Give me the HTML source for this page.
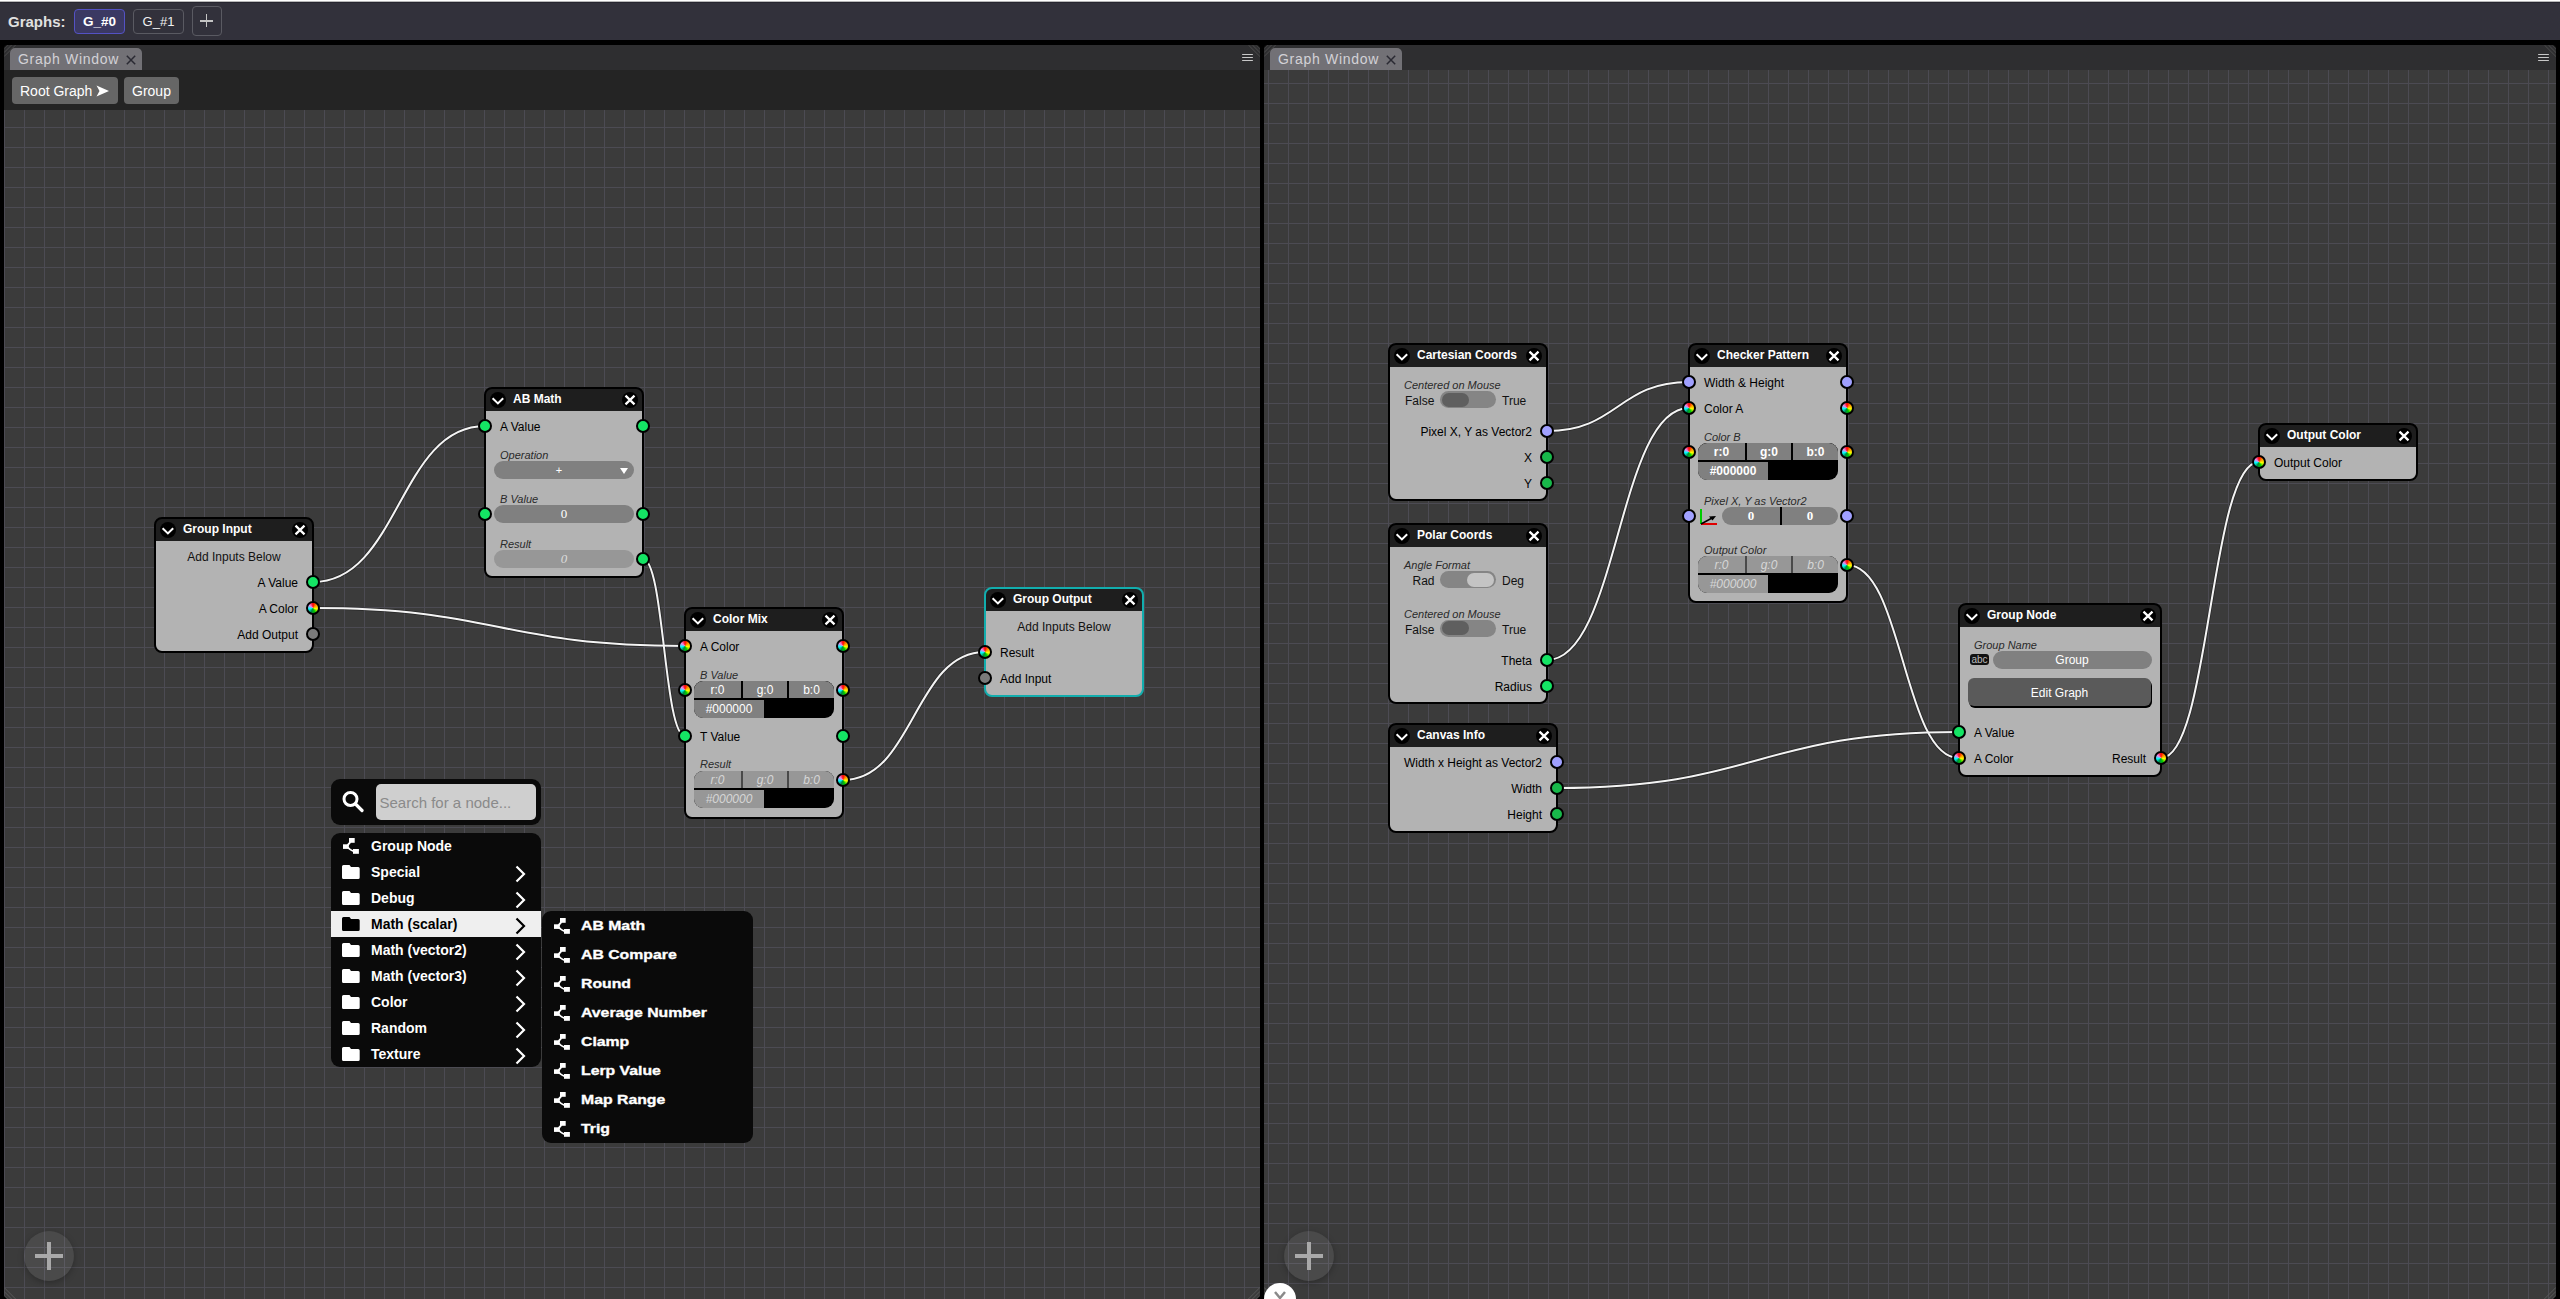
<!DOCTYPE html>
<html><head><meta charset="utf-8"><title>Graphs</title>
<style>
html,body{margin:0;padding:0;width:2560px;height:1299px;overflow:hidden;background:#000;font-family:"Liberation Sans",sans-serif;}
.abs{position:absolute;}
#topstrip{position:absolute;left:0;top:0;width:2560px;height:3px;background:linear-gradient(#fff 0,#fff 1px,#b8b8b8 1px,#b8b8b8 2px,#26252f 2px);z-index:2}
#topbar{position:absolute;left:0;top:2px;width:2560px;height:38px;background:#32313b;}
.win{position:absolute;top:45px;bottom:0;background:#2e2e30;border-radius:3px 3px 0 0;overflow:hidden;}
.tab{position:absolute;top:3px;height:22px;border-radius:5px 5px 0 0;background:#727176;}
.grid{position:absolute;left:0;right:0;bottom:0;background-color:#3b3b3b;
 background-image:linear-gradient(to right,#4c4b53 1px,transparent 1px),linear-gradient(to bottom,#4c4b53 1px,transparent 1px);
 background-size:20px 20px;}
.node{position:absolute;border:2px solid #000;border-radius:8px;background:linear-gradient(#1e1e1e 22px,#b3b3b3 22px);}
.hdr{position:absolute;left:0;top:0;right:0;height:22px;background:#1e1e1e;border-radius:6px 6px 0 0;}
.fab{position:absolute;width:50px;height:50px;border-radius:50%;background:rgba(255,255,255,0.08);box-shadow:0 2px 6px rgba(0,0,0,0.25);}
.fab:before{content:"";position:absolute;left:11px;top:23px;width:28px;height:4px;background:#a9a9a9;}
.fab:after{content:"";position:absolute;left:23px;top:11px;width:4px;height:28px;background:#a9a9a9;}
.ham{position:absolute;width:11px;height:1.6px;background:#c8c8c8;border-radius:1px;}
</style></head><body>
<div id="topstrip"></div>
<div id="topbar">
  <div style="position:absolute;left:8px;top:1.3px;height:38px;font:bold 15px 'Liberation Sans',sans-serif;line-height:38px;color:#e0e0e0;">Graphs:</div>
  <div style="position:absolute;left:74px;top:7px;width:49px;height:23px;border:1px solid #5452c4;border-radius:4px;background:#3b3963;color:#fff;font:bold 13.5px 'Liberation Sans',sans-serif;line-height:23px;text-align:center;">G_#0</div>
  <div style="position:absolute;left:133px;top:7px;width:49px;height:23px;border:1px solid #5a5a62;border-radius:4px;color:#f0f0f0;font:13px 'Liberation Sans',sans-serif;line-height:23px;text-align:center;">G_#1</div>
  <div style="position:absolute;left:192px;top:4px;width:28px;height:28px;border:1px solid #5a5a62;border-radius:4px;"></div>
  <div style="position:absolute;left:200px;top:18.2px;width:13px;height:1.9px;background:#c4c4c4"></div>
  <div style="position:absolute;left:205.5px;top:12.2px;width:1.9px;height:13px;background:#c4c4c4"></div>
</div>

<!-- LEFT WINDOW -->
<div class="win" style="left:4px;width:1256px;">
  <div class="tab" style="left:6px;width:132px;"></div>
  <div style="position:absolute;left:14px;top:3px;font:14px 'Liberation Sans',sans-serif;line-height:22px;letter-spacing:0.7px;color:#d2d2d6;">Graph Window</div>
  <svg width="10" height="10" style="position:absolute;left:122px;top:10px" viewBox="0 0 10 10"><path d="M0.8 0.8 L9.2 9.2 M9.2 0.8 L0.8 9.2" stroke="#2a2a33" stroke-width="1.5"/></svg>
  <div class="ham" style="left:1238px;top:8.5px"></div><div class="ham" style="left:1238px;top:11.6px"></div><div class="ham" style="left:1238px;top:14.7px"></div>
  <div style="position:absolute;left:0;top:25px;width:1256px;height:40px;background:#242424;"></div>
  <div style="position:absolute;left:8px;top:32px;width:106px;height:27px;border-radius:4px;background:#666;"></div>
  <div style="position:absolute;left:16px;top:33px;font:14px 'Liberation Sans',sans-serif;line-height:27px;color:#fff;">Root Graph</div>
  <svg width="14" height="12" style="position:absolute;left:92px;top:40px" viewBox="0 0 14 12"><path d="M0.5 0.5 L13 6 L0.5 11.5 L3.5 6 Z" fill="#fff"/></svg>
  <div style="position:absolute;left:120px;top:32px;width:55px;height:27px;border-radius:4px;background:#666;"></div>
  <div style="position:absolute;left:120px;top:33px;width:55px;text-align:center;font:14px 'Liberation Sans',sans-serif;line-height:27px;color:#fff;">Group</div>
  <div class="grid" style="top:65px;background-position:0px 17px;">
    <div style="position:absolute;left:-4px;top:-110px;width:1260px;height:1299px;">
      <svg width="1260" height="1299" style="position:absolute;left:0;top:0" fill="none"><path d="M313 582 C399.0 582 399.0 426 485 426" stroke="#000" stroke-opacity="0.35" stroke-width="3.6"/><path d="M313 608 C499.0 608 499.0 646 685 646" stroke="#000" stroke-opacity="0.35" stroke-width="3.6"/><path d="M643 559 C664.0 559 664.0 736 685 736" stroke="#000" stroke-opacity="0.35" stroke-width="3.6"/><path d="M843 780 C914.0 780 914.0 652 985 652" stroke="#000" stroke-opacity="0.35" stroke-width="3.6"/><path d="M313 582 C399.0 582 399.0 426 485 426" stroke="#f4f4f4" stroke-width="2"/><path d="M313 608 C499.0 608 499.0 646 685 646" stroke="#f4f4f4" stroke-width="2"/><path d="M643 559 C664.0 559 664.0 736 685 736" stroke="#f4f4f4" stroke-width="2"/><path d="M843 780 C914.0 780 914.0 652 985 652" stroke="#f4f4f4" stroke-width="2"/></svg>
      <div class="node" style="left:154px;top:517px;width:156px;height:132px;border-color:#000;"><div style="position:absolute;left:-2px;top:-2px;width:160px;height:136px;"><svg width="16" height="16" style="position:absolute;left:6px;top:5px" viewBox="0 0 16 16"><circle cx="8" cy="8" r="8" fill="#000"/><path d="M2.6 6.3 L7.9 11.4 L13.2 6.3" stroke="#fff" stroke-width="2" fill="none"/></svg><svg width="16" height="16" style="position:absolute;left:138px;top:5px" viewBox="0 0 16 16"><circle cx="8" cy="8" r="8" fill="#000"/><path d="M3.5 3.7 L12.5 12.3 M12.5 3.7 L3.5 12.3" stroke="#fff" stroke-width="2.3" fill="none"/></svg><div style="position:absolute;left:29px;top:1.84px;font:normal bold 12px 'Liberation Sans', sans-serif;line-height:20px;height:20px;color:#fff;white-space:nowrap;">Group Input</div><div style="position:absolute;left:10.0px;width:140px;text-align:center;top:30.34px;font:normal normal 12px 'Liberation Sans', sans-serif;line-height:20px;height:20px;color:#111;white-space:nowrap;">Add Inputs Below</div><div style="position:absolute;right:16px;top:56.34px;font:normal normal 12px 'Liberation Sans', sans-serif;line-height:20px;height:20px;color:#000;white-space:nowrap;">A Value</div><div style="position:absolute;left:152px;top:58px;width:10px;height:10px;border:2px solid #000;border-radius:50%;background:#14e464;"></div><div style="position:absolute;right:16px;top:82.34px;font:normal normal 12px 'Liberation Sans', sans-serif;line-height:20px;height:20px;color:#000;white-space:nowrap;">A Color</div><div style="position:absolute;left:152px;top:84px;width:10px;height:10px;border:2px solid #000;border-radius:50%;background:conic-gradient(from 0deg, #ff0000, #ff9900, #ffff00, #00cc00, #008844, #00ffff, #ee88ee, #ff0000);"></div><div style="position:absolute;right:16px;top:108.34px;font:normal normal 12px 'Liberation Sans', sans-serif;line-height:20px;height:20px;color:#000;white-space:nowrap;">Add Output</div><div style="position:absolute;left:152px;top:110px;width:10px;height:10px;border:2px solid #000;border-radius:50%;background:#7a7a7a;"></div></div></div>
<div class="node" style="left:484px;top:387px;width:156px;height:187px;border-color:#000;"><div style="position:absolute;left:-2px;top:-2px;width:160px;height:191px;"><svg width="16" height="16" style="position:absolute;left:6px;top:5px" viewBox="0 0 16 16"><circle cx="8" cy="8" r="8" fill="#000"/><path d="M2.6 6.3 L7.9 11.4 L13.2 6.3" stroke="#fff" stroke-width="2" fill="none"/></svg><svg width="16" height="16" style="position:absolute;left:138px;top:5px" viewBox="0 0 16 16"><circle cx="8" cy="8" r="8" fill="#000"/><path d="M3.5 3.7 L12.5 12.3 M12.5 3.7 L3.5 12.3" stroke="#fff" stroke-width="2.3" fill="none"/></svg><div style="position:absolute;left:29px;top:1.84px;font:normal bold 12px 'Liberation Sans', sans-serif;line-height:20px;height:20px;color:#fff;white-space:nowrap;">AB Math</div><div style="position:absolute;left:16px;top:30.34px;font:normal normal 12px 'Liberation Sans', sans-serif;line-height:20px;height:20px;color:#000;white-space:nowrap;">A Value</div><div style="position:absolute;left:-6px;top:32px;width:10px;height:10px;border:2px solid #000;border-radius:50%;background:#14e464;"></div><div style="position:absolute;left:152px;top:32px;width:10px;height:10px;border:2px solid #000;border-radius:50%;background:#14e464;"></div><div style="position:absolute;left:16px;top:58.19px;font:italic normal 11px 'Liberation Sans', sans-serif;line-height:20px;height:20px;color:#2a2a2a;white-space:nowrap;">Operation</div><div style="position:absolute;left:10px;top:74px;width:140px;height:18px;border-radius:9.0px;background:#808080;"><div style="position:absolute;left:55.0px;width:20px;text-align:center;top:-1.31px;font:normal normal 11px 'Liberation Sans', sans-serif;line-height:20px;height:20px;color:#fff;white-space:nowrap;">+</div><svg width="8" height="6" style="position:absolute;left:126px;top:6.5px"><path d="M0 0 L8 0 L4 6 Z" fill="#fff"/></svg></div><div style="position:absolute;left:16px;top:102.19px;font:italic normal 11px 'Liberation Sans', sans-serif;line-height:20px;height:20px;color:#2a2a2a;white-space:nowrap;">B Value</div><div style="position:absolute;left:10px;top:118px;width:140px;height:18px;border-radius:9.0px;background:#808080;"><div style="position:absolute;left:50.0px;width:40px;text-align:center;top:-1.50px;font:normal normal 13px 'Liberation Serif', serif;line-height:20px;height:20px;color:#fff;white-space:nowrap;">0</div></div><div style="position:absolute;left:-6px;top:120px;width:10px;height:10px;border:2px solid #000;border-radius:50%;background:#14e464;"></div><div style="position:absolute;left:152px;top:120px;width:10px;height:10px;border:2px solid #000;border-radius:50%;background:#14e464;"></div><div style="position:absolute;left:16px;top:147.19px;font:italic normal 11px 'Liberation Sans', sans-serif;line-height:20px;height:20px;color:#2a2a2a;white-space:nowrap;">Result</div><div style="position:absolute;left:10px;top:163px;width:140px;height:18px;border-radius:9.0px;background:#979797;"><div style="position:absolute;left:50.0px;width:40px;text-align:center;top:-1.50px;font:italic normal 13px 'Liberation Serif', serif;line-height:20px;height:20px;color:#dcdcdc;white-space:nowrap;">0</div></div><div style="position:absolute;left:152px;top:165px;width:10px;height:10px;border:2px solid #000;border-radius:50%;background:#14e464;"></div></div></div>
<div class="node" style="left:684px;top:607px;width:156px;height:208px;border-color:#000;"><div style="position:absolute;left:-2px;top:-2px;width:160px;height:212px;"><svg width="16" height="16" style="position:absolute;left:6px;top:5px" viewBox="0 0 16 16"><circle cx="8" cy="8" r="8" fill="#000"/><path d="M2.6 6.3 L7.9 11.4 L13.2 6.3" stroke="#fff" stroke-width="2" fill="none"/></svg><svg width="16" height="16" style="position:absolute;left:138px;top:5px" viewBox="0 0 16 16"><circle cx="8" cy="8" r="8" fill="#000"/><path d="M3.5 3.7 L12.5 12.3 M12.5 3.7 L3.5 12.3" stroke="#fff" stroke-width="2.3" fill="none"/></svg><div style="position:absolute;left:29px;top:1.84px;font:normal bold 12px 'Liberation Sans', sans-serif;line-height:20px;height:20px;color:#fff;white-space:nowrap;">Color Mix</div><div style="position:absolute;left:16px;top:30.34px;font:normal normal 12px 'Liberation Sans', sans-serif;line-height:20px;height:20px;color:#000;white-space:nowrap;">A Color</div><div style="position:absolute;left:-6px;top:32px;width:10px;height:10px;border:2px solid #000;border-radius:50%;background:conic-gradient(from 0deg, #ff0000, #ff9900, #ffff00, #00cc00, #008844, #00ffff, #ee88ee, #ff0000);"></div><div style="position:absolute;left:152px;top:32px;width:10px;height:10px;border:2px solid #000;border-radius:50%;background:conic-gradient(from 0deg, #ff0000, #ff9900, #ffff00, #00cc00, #008844, #00ffff, #ee88ee, #ff0000);"></div><div style="position:absolute;left:16px;top:57.69px;font:italic normal 11px 'Liberation Sans', sans-serif;line-height:20px;height:20px;color:#2a2a2a;white-space:nowrap;">B Value</div><div style="position:absolute;left:10px;top:74px;width:140px;height:37px;border-radius:9px;overflow:hidden;background:#000;"><div style="position:absolute;left:0;top:0;width:140px;height:17px;background:#000"></div><div style="position:absolute;left:0;top:0;width:47px;height:17px;background:#808080"></div><div style="position:absolute;left:49px;top:0;width:44px;height:17px;background:#808080"></div><div style="position:absolute;left:95px;top:0;width:45px;height:17px;background:#808080"></div><div style="position:absolute;left:0;top:19px;width:70px;height:18px;background:#808080"></div><div style="position:absolute;left:0.0px;width:47px;text-align:center;top:-1.16px;font:normal normal 12px 'Liberation Sans', sans-serif;line-height:20px;height:20px;color:#fff;white-space:nowrap;">r:0</div><div style="position:absolute;left:49.0px;width:44px;text-align:center;top:-1.16px;font:normal normal 12px 'Liberation Sans', sans-serif;line-height:20px;height:20px;color:#fff;white-space:nowrap;">g:0</div><div style="position:absolute;left:95.0px;width:45px;text-align:center;top:-1.16px;font:normal normal 12px 'Liberation Sans', sans-serif;line-height:20px;height:20px;color:#fff;white-space:nowrap;">b:0</div><div style="position:absolute;left:0.0px;width:70px;text-align:center;top:17.84px;font:normal normal 12px 'Liberation Sans', sans-serif;line-height:20px;height:20px;color:#fff;white-space:nowrap;">#000000</div></div><div style="position:absolute;left:-6px;top:76px;width:10px;height:10px;border:2px solid #000;border-radius:50%;background:conic-gradient(from 0deg, #ff0000, #ff9900, #ffff00, #00cc00, #008844, #00ffff, #ee88ee, #ff0000);"></div><div style="position:absolute;left:152px;top:76px;width:10px;height:10px;border:2px solid #000;border-radius:50%;background:conic-gradient(from 0deg, #ff0000, #ff9900, #ffff00, #00cc00, #008844, #00ffff, #ee88ee, #ff0000);"></div><div style="position:absolute;left:16px;top:120.34px;font:normal normal 12px 'Liberation Sans', sans-serif;line-height:20px;height:20px;color:#000;white-space:nowrap;">T Value</div><div style="position:absolute;left:-6px;top:122px;width:10px;height:10px;border:2px solid #000;border-radius:50%;background:#14e464;"></div><div style="position:absolute;left:152px;top:122px;width:10px;height:10px;border:2px solid #000;border-radius:50%;background:#14e464;"></div><div style="position:absolute;left:16px;top:147.19px;font:italic normal 11px 'Liberation Sans', sans-serif;line-height:20px;height:20px;color:#2a2a2a;white-space:nowrap;">Result</div><div style="position:absolute;left:10px;top:164px;width:140px;height:37px;border-radius:9px;overflow:hidden;background:#000;"><div style="position:absolute;left:0;top:0;width:140px;height:17px;background:#4a4a4a"></div><div style="position:absolute;left:0;top:0;width:47px;height:17px;background:#979797"></div><div style="position:absolute;left:49px;top:0;width:44px;height:17px;background:#979797"></div><div style="position:absolute;left:95px;top:0;width:45px;height:17px;background:#979797"></div><div style="position:absolute;left:0;top:19px;width:70px;height:18px;background:#979797"></div><div style="position:absolute;left:0.0px;width:47px;text-align:center;top:-1.16px;font:italic normal 12px 'Liberation Sans', sans-serif;line-height:20px;height:20px;color:#d6d6d6;white-space:nowrap;">r:0</div><div style="position:absolute;left:49.0px;width:44px;text-align:center;top:-1.16px;font:italic normal 12px 'Liberation Sans', sans-serif;line-height:20px;height:20px;color:#d6d6d6;white-space:nowrap;">g:0</div><div style="position:absolute;left:95.0px;width:45px;text-align:center;top:-1.16px;font:italic normal 12px 'Liberation Sans', sans-serif;line-height:20px;height:20px;color:#d6d6d6;white-space:nowrap;">b:0</div><div style="position:absolute;left:0.0px;width:70px;text-align:center;top:17.84px;font:italic normal 12px 'Liberation Sans', sans-serif;line-height:20px;height:20px;color:#d6d6d6;white-space:nowrap;">#000000</div></div><div style="position:absolute;left:152px;top:166px;width:10px;height:10px;border:2px solid #000;border-radius:50%;background:conic-gradient(from 0deg, #ff0000, #ff9900, #ffff00, #00cc00, #008844, #00ffff, #ee88ee, #ff0000);"></div></div></div>
<div class="node" style="left:984px;top:587px;width:156px;height:106px;border-color:#12adad;"><div style="position:absolute;left:-2px;top:-2px;width:160px;height:110px;"><svg width="16" height="16" style="position:absolute;left:6px;top:5px" viewBox="0 0 16 16"><circle cx="8" cy="8" r="8" fill="#000"/><path d="M2.6 6.3 L7.9 11.4 L13.2 6.3" stroke="#fff" stroke-width="2" fill="none"/></svg><svg width="16" height="16" style="position:absolute;left:138px;top:5px" viewBox="0 0 16 16"><circle cx="8" cy="8" r="8" fill="#000"/><path d="M3.5 3.7 L12.5 12.3 M12.5 3.7 L3.5 12.3" stroke="#fff" stroke-width="2.3" fill="none"/></svg><div style="position:absolute;left:29px;top:1.84px;font:normal bold 12px 'Liberation Sans', sans-serif;line-height:20px;height:20px;color:#fff;white-space:nowrap;">Group Output</div><div style="position:absolute;left:10.0px;width:140px;text-align:center;top:30.34px;font:normal normal 12px 'Liberation Sans', sans-serif;line-height:20px;height:20px;color:#111;white-space:nowrap;">Add Inputs Below</div><div style="position:absolute;left:16px;top:56.34px;font:normal normal 12px 'Liberation Sans', sans-serif;line-height:20px;height:20px;color:#000;white-space:nowrap;">Result</div><div style="position:absolute;left:-6px;top:58px;width:10px;height:10px;border:2px solid #000;border-radius:50%;background:conic-gradient(from 0deg, #ff0000, #ff9900, #ffff00, #00cc00, #008844, #00ffff, #ee88ee, #ff0000);"></div><div style="position:absolute;left:16px;top:82.34px;font:normal normal 12px 'Liberation Sans', sans-serif;line-height:20px;height:20px;color:#000;white-space:nowrap;">Add Input</div><div style="position:absolute;left:-6px;top:84px;width:10px;height:10px;border:2px solid #000;border-radius:50%;background:#7a7a7a;"></div></div></div>
      <div style="position:absolute;left:331px;top:779px;width:210px;height:46px;border-radius:9px;background:#0a0a0a"></div>
<svg width="26" height="26" viewBox="0 0 26 26" style="position:absolute;left:338px;top:787px"><circle cx="12.5" cy="12" r="6.5" stroke="#fff" stroke-width="3" fill="none"/><path d="M17.5 17 L24 23.5" stroke="#fff" stroke-width="3.2" stroke-linecap="round"/></svg>
<div style="position:absolute;left:376px;top:784px;width:160px;height:36px;border-radius:5px;background:#cfcfcf"></div>
<div style="position:absolute;left:379.5px;top:792.80px;font:normal normal 15px 'Liberation Sans', sans-serif;line-height:20px;height:20px;color:#8a8a8a;white-space:nowrap;">Search for a node...</div>
<div style="position:absolute;left:331px;top:833px;width:210px;height:234px;border-radius:9px;background:#0a0a0a;overflow:hidden">
<svg width="18" height="18" viewBox="0 0 18 18" style="position:absolute;left:11px;top:5px"><rect x="7" y="0" width="5.7" height="4.8" fill="#fff"/><rect x="1" y="6.3" width="5.5" height="4.6" fill="#fff"/><rect x="11" y="11" width="5.9" height="4.8" fill="#fff"/><path d="M8.5 4 Q6 6 5.5 8.5 Q6.5 11 11.5 13.2" stroke="#fff" stroke-width="1.8" fill="none"/></svg>
<div style="position:absolute;left:40px;top:3.15px;font:normal bold 14px 'Liberation Sans', sans-serif;line-height:20px;height:20px;color:#fff;white-space:nowrap;">Group Node</div>
<svg width="18" height="15" viewBox="0 0 18 15" style="position:absolute;left:11px;top:32px"><path d="M1.5 0 H7.5 L9 2 H16.2 Q17.7 2 17.7 3.5 V12.5 Q17.7 14 16.2 14 H1.5 Q0 14 0 12.5 V1.5 Q0 0 1.5 0 Z" fill="#fff"/></svg>
<div style="position:absolute;left:40px;top:29.15px;font:normal bold 14px 'Liberation Sans', sans-serif;line-height:20px;height:20px;color:#fff;white-space:nowrap;">Special</div>
<svg width="14" height="18" viewBox="0 0 14 18" style="position:absolute;left:183px;top:32px"><path d="M2.5 1.5 L10 9 L2.5 16.5" stroke="#fff" stroke-width="2.2" fill="none"/></svg>
<svg width="18" height="15" viewBox="0 0 18 15" style="position:absolute;left:11px;top:58px"><path d="M1.5 0 H7.5 L9 2 H16.2 Q17.7 2 17.7 3.5 V12.5 Q17.7 14 16.2 14 H1.5 Q0 14 0 12.5 V1.5 Q0 0 1.5 0 Z" fill="#fff"/></svg>
<div style="position:absolute;left:40px;top:55.15px;font:normal bold 14px 'Liberation Sans', sans-serif;line-height:20px;height:20px;color:#fff;white-space:nowrap;">Debug</div>
<svg width="14" height="18" viewBox="0 0 14 18" style="position:absolute;left:183px;top:58px"><path d="M2.5 1.5 L10 9 L2.5 16.5" stroke="#fff" stroke-width="2.2" fill="none"/></svg>
<div style="position:absolute;left:0;top:78px;width:210px;height:26px;background:#efefef"></div>
<svg width="18" height="15" viewBox="0 0 18 15" style="position:absolute;left:11px;top:84px"><path d="M1.5 0 H7.5 L9 2 H16.2 Q17.7 2 17.7 3.5 V12.5 Q17.7 14 16.2 14 H1.5 Q0 14 0 12.5 V1.5 Q0 0 1.5 0 Z" fill="#000"/></svg>
<div style="position:absolute;left:40px;top:81.15px;font:normal bold 14px 'Liberation Sans', sans-serif;line-height:20px;height:20px;color:#000;white-space:nowrap;">Math (scalar)</div>
<svg width="14" height="18" viewBox="0 0 14 18" style="position:absolute;left:183px;top:84px"><path d="M2.5 1.5 L10 9 L2.5 16.5" stroke="#000" stroke-width="2.2" fill="none"/></svg>
<svg width="18" height="15" viewBox="0 0 18 15" style="position:absolute;left:11px;top:110px"><path d="M1.5 0 H7.5 L9 2 H16.2 Q17.7 2 17.7 3.5 V12.5 Q17.7 14 16.2 14 H1.5 Q0 14 0 12.5 V1.5 Q0 0 1.5 0 Z" fill="#fff"/></svg>
<div style="position:absolute;left:40px;top:107.15px;font:normal bold 14px 'Liberation Sans', sans-serif;line-height:20px;height:20px;color:#fff;white-space:nowrap;">Math (vector2)</div>
<svg width="14" height="18" viewBox="0 0 14 18" style="position:absolute;left:183px;top:110px"><path d="M2.5 1.5 L10 9 L2.5 16.5" stroke="#fff" stroke-width="2.2" fill="none"/></svg>
<svg width="18" height="15" viewBox="0 0 18 15" style="position:absolute;left:11px;top:136px"><path d="M1.5 0 H7.5 L9 2 H16.2 Q17.7 2 17.7 3.5 V12.5 Q17.7 14 16.2 14 H1.5 Q0 14 0 12.5 V1.5 Q0 0 1.5 0 Z" fill="#fff"/></svg>
<div style="position:absolute;left:40px;top:133.15px;font:normal bold 14px 'Liberation Sans', sans-serif;line-height:20px;height:20px;color:#fff;white-space:nowrap;">Math (vector3)</div>
<svg width="14" height="18" viewBox="0 0 14 18" style="position:absolute;left:183px;top:136px"><path d="M2.5 1.5 L10 9 L2.5 16.5" stroke="#fff" stroke-width="2.2" fill="none"/></svg>
<svg width="18" height="15" viewBox="0 0 18 15" style="position:absolute;left:11px;top:162px"><path d="M1.5 0 H7.5 L9 2 H16.2 Q17.7 2 17.7 3.5 V12.5 Q17.7 14 16.2 14 H1.5 Q0 14 0 12.5 V1.5 Q0 0 1.5 0 Z" fill="#fff"/></svg>
<div style="position:absolute;left:40px;top:159.15px;font:normal bold 14px 'Liberation Sans', sans-serif;line-height:20px;height:20px;color:#fff;white-space:nowrap;">Color</div>
<svg width="14" height="18" viewBox="0 0 14 18" style="position:absolute;left:183px;top:162px"><path d="M2.5 1.5 L10 9 L2.5 16.5" stroke="#fff" stroke-width="2.2" fill="none"/></svg>
<svg width="18" height="15" viewBox="0 0 18 15" style="position:absolute;left:11px;top:188px"><path d="M1.5 0 H7.5 L9 2 H16.2 Q17.7 2 17.7 3.5 V12.5 Q17.7 14 16.2 14 H1.5 Q0 14 0 12.5 V1.5 Q0 0 1.5 0 Z" fill="#fff"/></svg>
<div style="position:absolute;left:40px;top:185.15px;font:normal bold 14px 'Liberation Sans', sans-serif;line-height:20px;height:20px;color:#fff;white-space:nowrap;">Random</div>
<svg width="14" height="18" viewBox="0 0 14 18" style="position:absolute;left:183px;top:188px"><path d="M2.5 1.5 L10 9 L2.5 16.5" stroke="#fff" stroke-width="2.2" fill="none"/></svg>
<svg width="18" height="15" viewBox="0 0 18 15" style="position:absolute;left:11px;top:214px"><path d="M1.5 0 H7.5 L9 2 H16.2 Q17.7 2 17.7 3.5 V12.5 Q17.7 14 16.2 14 H1.5 Q0 14 0 12.5 V1.5 Q0 0 1.5 0 Z" fill="#fff"/></svg>
<div style="position:absolute;left:40px;top:211.15px;font:normal bold 14px 'Liberation Sans', sans-serif;line-height:20px;height:20px;color:#fff;white-space:nowrap;">Texture</div>
<svg width="14" height="18" viewBox="0 0 14 18" style="position:absolute;left:183px;top:214px"><path d="M2.5 1.5 L10 9 L2.5 16.5" stroke="#fff" stroke-width="2.2" fill="none"/></svg>
</div>
<div style="position:absolute;left:542px;top:911px;width:211px;height:232px;border-radius:9px;background:#0a0a0a;overflow:hidden">
<svg width="18" height="18" viewBox="0 0 18 18" style="position:absolute;left:11px;top:7px"><rect x="7" y="0" width="5.7" height="4.8" fill="#fff"/><rect x="1" y="6.3" width="5.5" height="4.6" fill="#fff"/><rect x="11" y="11" width="5.9" height="4.8" fill="#fff"/><path d="M8.5 4 Q6 6 5.5 8.5 Q6.5 11 11.5 13.2" stroke="#fff" stroke-width="1.8" fill="none"/></svg>
<div style="position:absolute;left:39px;top:5.30px;font:normal bold 13px 'Liberation Sans', sans-serif;line-height:20px;height:20px;color:#fff;white-space:nowrap;transform:scaleX(1.215);transform-origin:0 0;-webkit-text-stroke:0.35px #fff;">AB Math</div>
<svg width="18" height="18" viewBox="0 0 18 18" style="position:absolute;left:11px;top:36px"><rect x="7" y="0" width="5.7" height="4.8" fill="#fff"/><rect x="1" y="6.3" width="5.5" height="4.6" fill="#fff"/><rect x="11" y="11" width="5.9" height="4.8" fill="#fff"/><path d="M8.5 4 Q6 6 5.5 8.5 Q6.5 11 11.5 13.2" stroke="#fff" stroke-width="1.8" fill="none"/></svg>
<div style="position:absolute;left:39px;top:34.30px;font:normal bold 13px 'Liberation Sans', sans-serif;line-height:20px;height:20px;color:#fff;white-space:nowrap;transform:scaleX(1.215);transform-origin:0 0;-webkit-text-stroke:0.35px #fff;">AB Compare</div>
<svg width="18" height="18" viewBox="0 0 18 18" style="position:absolute;left:11px;top:65px"><rect x="7" y="0" width="5.7" height="4.8" fill="#fff"/><rect x="1" y="6.3" width="5.5" height="4.6" fill="#fff"/><rect x="11" y="11" width="5.9" height="4.8" fill="#fff"/><path d="M8.5 4 Q6 6 5.5 8.5 Q6.5 11 11.5 13.2" stroke="#fff" stroke-width="1.8" fill="none"/></svg>
<div style="position:absolute;left:39px;top:63.30px;font:normal bold 13px 'Liberation Sans', sans-serif;line-height:20px;height:20px;color:#fff;white-space:nowrap;transform:scaleX(1.215);transform-origin:0 0;-webkit-text-stroke:0.35px #fff;">Round</div>
<svg width="18" height="18" viewBox="0 0 18 18" style="position:absolute;left:11px;top:94px"><rect x="7" y="0" width="5.7" height="4.8" fill="#fff"/><rect x="1" y="6.3" width="5.5" height="4.6" fill="#fff"/><rect x="11" y="11" width="5.9" height="4.8" fill="#fff"/><path d="M8.5 4 Q6 6 5.5 8.5 Q6.5 11 11.5 13.2" stroke="#fff" stroke-width="1.8" fill="none"/></svg>
<div style="position:absolute;left:39px;top:92.30px;font:normal bold 13px 'Liberation Sans', sans-serif;line-height:20px;height:20px;color:#fff;white-space:nowrap;transform:scaleX(1.215);transform-origin:0 0;-webkit-text-stroke:0.35px #fff;">Average Number</div>
<svg width="18" height="18" viewBox="0 0 18 18" style="position:absolute;left:11px;top:123px"><rect x="7" y="0" width="5.7" height="4.8" fill="#fff"/><rect x="1" y="6.3" width="5.5" height="4.6" fill="#fff"/><rect x="11" y="11" width="5.9" height="4.8" fill="#fff"/><path d="M8.5 4 Q6 6 5.5 8.5 Q6.5 11 11.5 13.2" stroke="#fff" stroke-width="1.8" fill="none"/></svg>
<div style="position:absolute;left:39px;top:121.30px;font:normal bold 13px 'Liberation Sans', sans-serif;line-height:20px;height:20px;color:#fff;white-space:nowrap;transform:scaleX(1.215);transform-origin:0 0;-webkit-text-stroke:0.35px #fff;">Clamp</div>
<svg width="18" height="18" viewBox="0 0 18 18" style="position:absolute;left:11px;top:152px"><rect x="7" y="0" width="5.7" height="4.8" fill="#fff"/><rect x="1" y="6.3" width="5.5" height="4.6" fill="#fff"/><rect x="11" y="11" width="5.9" height="4.8" fill="#fff"/><path d="M8.5 4 Q6 6 5.5 8.5 Q6.5 11 11.5 13.2" stroke="#fff" stroke-width="1.8" fill="none"/></svg>
<div style="position:absolute;left:39px;top:150.30px;font:normal bold 13px 'Liberation Sans', sans-serif;line-height:20px;height:20px;color:#fff;white-space:nowrap;transform:scaleX(1.215);transform-origin:0 0;-webkit-text-stroke:0.35px #fff;">Lerp Value</div>
<svg width="18" height="18" viewBox="0 0 18 18" style="position:absolute;left:11px;top:181px"><rect x="7" y="0" width="5.7" height="4.8" fill="#fff"/><rect x="1" y="6.3" width="5.5" height="4.6" fill="#fff"/><rect x="11" y="11" width="5.9" height="4.8" fill="#fff"/><path d="M8.5 4 Q6 6 5.5 8.5 Q6.5 11 11.5 13.2" stroke="#fff" stroke-width="1.8" fill="none"/></svg>
<div style="position:absolute;left:39px;top:179.30px;font:normal bold 13px 'Liberation Sans', sans-serif;line-height:20px;height:20px;color:#fff;white-space:nowrap;transform:scaleX(1.215);transform-origin:0 0;-webkit-text-stroke:0.35px #fff;">Map Range</div>
<svg width="18" height="18" viewBox="0 0 18 18" style="position:absolute;left:11px;top:210px"><rect x="7" y="0" width="5.7" height="4.8" fill="#fff"/><rect x="1" y="6.3" width="5.5" height="4.6" fill="#fff"/><rect x="11" y="11" width="5.9" height="4.8" fill="#fff"/><path d="M8.5 4 Q6 6 5.5 8.5 Q6.5 11 11.5 13.2" stroke="#fff" stroke-width="1.8" fill="none"/></svg>
<div style="position:absolute;left:39px;top:208.30px;font:normal bold 13px 'Liberation Sans', sans-serif;line-height:20px;height:20px;color:#fff;white-space:nowrap;transform:scaleX(1.215);transform-origin:0 0;-webkit-text-stroke:0.35px #fff;">Trig</div>
</div>
    </div>
    <div class="fab" style="left:20px;bottom:18px;"></div>
  </div>
  <svg width="13" height="13" style="position:absolute;left:0;top:0" viewBox="0 0 13 13"><path d="M0 0 H3.6 L0 3.6 Z" fill="#000"/><path d="M0 3.6 L3.6 0 M0 7.6 L7.6 0 M0 11.6 L11.6 0" stroke="#4c4c4c" stroke-width="1"/></svg><svg width="13" height="13" style="position:absolute;left:1243px;top:0;transform:scaleX(-1)" viewBox="0 0 13 13"><path d="M0 0 H3.6 L0 3.6 Z" fill="#000"/><path d="M0 3.6 L3.6 0 M0 7.6 L7.6 0 M0 11.6 L11.6 0" stroke="#4c4c4c" stroke-width="1"/></svg><svg width="13" height="13" style="position:absolute;left:0;bottom:0;transform:scaleY(-1)" viewBox="0 0 13 13"><path d="M0 0 H3.6 L0 3.6 Z" fill="#000"/><path d="M0 3.6 L3.6 0 M0 7.6 L7.6 0 M0 11.6 L11.6 0" stroke="#5a5a5a" stroke-width="1"/></svg><svg width="13" height="13" style="position:absolute;left:1243px;bottom:0;transform:scale(-1,-1)" viewBox="0 0 13 13"><path d="M0 0 H3.6 L0 3.6 Z" fill="#000"/><path d="M0 3.6 L3.6 0 M0 7.6 L7.6 0 M0 11.6 L11.6 0" stroke="#5a5a5a" stroke-width="1"/></svg>
</div>

<!-- RIGHT WINDOW -->
<div class="win" style="left:1264px;width:1292px;">
  <div class="tab" style="left:6px;width:132px;"></div>
  <div style="position:absolute;left:14px;top:3px;font:14px 'Liberation Sans',sans-serif;line-height:22px;letter-spacing:0.7px;color:#d2d2d6;">Graph Window</div>
  <svg width="10" height="10" style="position:absolute;left:122px;top:10px" viewBox="0 0 10 10"><path d="M0.8 0.8 L9.2 9.2 M9.2 0.8 L0.8 9.2" stroke="#2a2a33" stroke-width="1.5"/></svg>
  <div class="ham" style="left:1274px;top:8.5px"></div><div class="ham" style="left:1274px;top:11.6px"></div><div class="ham" style="left:1274px;top:14.7px"></div>
  <div class="grid" style="top:25px;background-position:4px 13px;">
    <div style="position:absolute;left:-1264px;top:-70px;width:2556px;height:1299px;">
      <svg width="2556" height="1299" style="position:absolute;left:0;top:0" fill="none"><path d="M1547 431 C1618.0 431 1618.0 382 1689 382" stroke="#000" stroke-opacity="0.35" stroke-width="3.6"/><path d="M1547 660 C1618.0 660 1618.0 408 1689 408" stroke="#000" stroke-opacity="0.35" stroke-width="3.6"/><path d="M1847 565 C1903.0 565 1903.0 758 1959 758" stroke="#000" stroke-opacity="0.35" stroke-width="3.6"/><path d="M1557 788 C1758.0 788 1758.0 732 1959 732" stroke="#000" stroke-opacity="0.35" stroke-width="3.6"/><path d="M2161 758 C2210.0 758 2210.0 462 2259 462" stroke="#000" stroke-opacity="0.35" stroke-width="3.6"/><path d="M1547 431 C1618.0 431 1618.0 382 1689 382" stroke="#f4f4f4" stroke-width="2"/><path d="M1547 660 C1618.0 660 1618.0 408 1689 408" stroke="#f4f4f4" stroke-width="2"/><path d="M1847 565 C1903.0 565 1903.0 758 1959 758" stroke="#f4f4f4" stroke-width="2"/><path d="M1557 788 C1758.0 788 1758.0 732 1959 732" stroke="#f4f4f4" stroke-width="2"/><path d="M2161 758 C2210.0 758 2210.0 462 2259 462" stroke="#f4f4f4" stroke-width="2"/></svg>
      <div class="node" style="left:1388px;top:343px;width:156px;height:154px;border-color:#000;"><div style="position:absolute;left:-2px;top:-2px;width:160px;height:158px;"><svg width="16" height="16" style="position:absolute;left:6px;top:5px" viewBox="0 0 16 16"><circle cx="8" cy="8" r="8" fill="#000"/><path d="M2.6 6.3 L7.9 11.4 L13.2 6.3" stroke="#fff" stroke-width="2" fill="none"/></svg><svg width="16" height="16" style="position:absolute;left:138px;top:5px" viewBox="0 0 16 16"><circle cx="8" cy="8" r="8" fill="#000"/><path d="M3.5 3.7 L12.5 12.3 M12.5 3.7 L3.5 12.3" stroke="#fff" stroke-width="2.3" fill="none"/></svg><div style="position:absolute;left:29px;top:1.84px;font:normal bold 12px 'Liberation Sans', sans-serif;line-height:20px;height:20px;color:#fff;white-space:nowrap;">Cartesian Coords</div><div style="position:absolute;left:16px;top:32.19px;font:italic normal 11px 'Liberation Sans', sans-serif;line-height:20px;height:20px;color:#2a2a2a;white-space:nowrap;">Centered on Mouse</div><div style="position:absolute;left:17px;top:48.34px;font:normal normal 12px 'Liberation Sans', sans-serif;line-height:20px;height:20px;color:#111;white-space:nowrap;">False</div><div style="position:absolute;left:52px;top:48px;width:56px;height:17px;border-radius:8.5px;background:#858585"><div style="position:absolute;left:1.5px;top:1.5px;width:27px;height:14px;border-radius:7px;background:#5f5f5f"></div></div><div style="position:absolute;left:114px;top:48.34px;font:normal normal 12px 'Liberation Sans', sans-serif;line-height:20px;height:20px;color:#111;white-space:nowrap;">True</div><div style="position:absolute;right:16px;top:79.34px;font:normal normal 12px 'Liberation Sans', sans-serif;line-height:20px;height:20px;color:#000;white-space:nowrap;">Pixel X, Y as Vector2</div><div style="position:absolute;left:152px;top:81px;width:10px;height:10px;border:2px solid #000;border-radius:50%;background:#a0a0ff;"></div><div style="position:absolute;right:16px;top:105.34px;font:normal normal 12px 'Liberation Sans', sans-serif;line-height:20px;height:20px;color:#000;white-space:nowrap;">X</div><div style="position:absolute;left:152px;top:107px;width:10px;height:10px;border:2px solid #000;border-radius:50%;background:#18b84a;"></div><div style="position:absolute;right:16px;top:131.34px;font:normal normal 12px 'Liberation Sans', sans-serif;line-height:20px;height:20px;color:#000;white-space:nowrap;">Y</div><div style="position:absolute;left:152px;top:133px;width:10px;height:10px;border:2px solid #000;border-radius:50%;background:#18b84a;"></div></div></div>
<div class="node" style="left:1688px;top:343px;width:156px;height:256px;border-color:#000;"><div style="position:absolute;left:-2px;top:-2px;width:160px;height:260px;"><svg width="16" height="16" style="position:absolute;left:6px;top:5px" viewBox="0 0 16 16"><circle cx="8" cy="8" r="8" fill="#000"/><path d="M2.6 6.3 L7.9 11.4 L13.2 6.3" stroke="#fff" stroke-width="2" fill="none"/></svg><svg width="16" height="16" style="position:absolute;left:138px;top:5px" viewBox="0 0 16 16"><circle cx="8" cy="8" r="8" fill="#000"/><path d="M3.5 3.7 L12.5 12.3 M12.5 3.7 L3.5 12.3" stroke="#fff" stroke-width="2.3" fill="none"/></svg><div style="position:absolute;left:29px;top:1.84px;font:normal bold 12px 'Liberation Sans', sans-serif;line-height:20px;height:20px;color:#fff;white-space:nowrap;">Checker Pattern</div><div style="position:absolute;left:16px;top:30.34px;font:normal normal 12px 'Liberation Sans', sans-serif;line-height:20px;height:20px;color:#000;white-space:nowrap;">Width &amp; Height</div><div style="position:absolute;left:-6px;top:32px;width:10px;height:10px;border:2px solid #000;border-radius:50%;background:#a0a0ff;"></div><div style="position:absolute;left:152px;top:32px;width:10px;height:10px;border:2px solid #000;border-radius:50%;background:#a0a0ff;"></div><div style="position:absolute;left:16px;top:56.34px;font:normal normal 12px 'Liberation Sans', sans-serif;line-height:20px;height:20px;color:#000;white-space:nowrap;">Color A</div><div style="position:absolute;left:-6px;top:58px;width:10px;height:10px;border:2px solid #000;border-radius:50%;background:conic-gradient(from 0deg, #ff0000, #ff9900, #ffff00, #00cc00, #008844, #00ffff, #ee88ee, #ff0000);"></div><div style="position:absolute;left:152px;top:58px;width:10px;height:10px;border:2px solid #000;border-radius:50%;background:conic-gradient(from 0deg, #ff0000, #ff9900, #ffff00, #00cc00, #008844, #00ffff, #ee88ee, #ff0000);"></div><div style="position:absolute;left:16px;top:83.69px;font:italic normal 11px 'Liberation Sans', sans-serif;line-height:20px;height:20px;color:#2a2a2a;white-space:nowrap;">Color B</div><div style="position:absolute;left:10px;top:100px;width:140px;height:37px;border-radius:9px;overflow:hidden;background:#000;"><div style="position:absolute;left:0;top:0;width:140px;height:17px;background:#000"></div><div style="position:absolute;left:0;top:0;width:47px;height:17px;background:#808080"></div><div style="position:absolute;left:49px;top:0;width:44px;height:17px;background:#808080"></div><div style="position:absolute;left:95px;top:0;width:45px;height:17px;background:#808080"></div><div style="position:absolute;left:0;top:19px;width:70px;height:18px;background:#808080"></div><div style="position:absolute;left:0.0px;width:47px;text-align:center;top:-1.16px;font:normal bold 12px 'Liberation Sans', sans-serif;line-height:20px;height:20px;color:#fff;white-space:nowrap;">r:0</div><div style="position:absolute;left:49.0px;width:44px;text-align:center;top:-1.16px;font:normal bold 12px 'Liberation Sans', sans-serif;line-height:20px;height:20px;color:#fff;white-space:nowrap;">g:0</div><div style="position:absolute;left:95.0px;width:45px;text-align:center;top:-1.16px;font:normal bold 12px 'Liberation Sans', sans-serif;line-height:20px;height:20px;color:#fff;white-space:nowrap;">b:0</div><div style="position:absolute;left:0.0px;width:70px;text-align:center;top:17.84px;font:normal bold 12px 'Liberation Sans', sans-serif;line-height:20px;height:20px;color:#fff;white-space:nowrap;">#000000</div></div><div style="position:absolute;left:-6px;top:101.5px;width:10px;height:10px;border:2px solid #000;border-radius:50%;background:conic-gradient(from 0deg, #ff0000, #ff9900, #ffff00, #00cc00, #008844, #00ffff, #ee88ee, #ff0000);"></div><div style="position:absolute;left:152px;top:101.5px;width:10px;height:10px;border:2px solid #000;border-radius:50%;background:conic-gradient(from 0deg, #ff0000, #ff9900, #ffff00, #00cc00, #008844, #00ffff, #ee88ee, #ff0000);"></div><div style="position:absolute;left:16px;top:147.69px;font:italic normal 11px 'Liberation Sans', sans-serif;line-height:20px;height:20px;color:#2a2a2a;white-space:nowrap;">Pixel X, Y as Vector2</div><svg width="18" height="18" style="position:absolute;left:12px;top:165px" viewBox="0 0 18 18"><path d="M1 1 V16" stroke="#00cc00" stroke-width="2"/><path d="M1 16 H17" stroke="#e00000" stroke-width="2"/><path d="M1 16 L13 9.5" stroke="#000" stroke-width="1.5"/><path d="M9 8.5 L16 8 L12.5 12.5 Z" fill="#000"/></svg><div style="position:absolute;left:34px;top:164px;width:116px;height:18px;border-radius:9px;overflow:hidden;"><div style="position:absolute;left:0;top:0;width:58px;height:18px;background:#808080"></div><div style="position:absolute;left:58px;top:0;width:2px;height:18px;background:#000"></div><div style="position:absolute;left:60px;top:0;width:56px;height:18px;background:#808080"></div><div style="position:absolute;left:14.0px;width:30px;text-align:center;top:-1.00px;font:normal bold 13px 'Liberation Serif', serif;line-height:20px;height:20px;color:#fff;white-space:nowrap;">0</div><div style="position:absolute;left:73.0px;width:30px;text-align:center;top:-1.00px;font:normal bold 13px 'Liberation Serif', serif;line-height:20px;height:20px;color:#fff;white-space:nowrap;">0</div></div><div style="position:absolute;left:-6px;top:166px;width:10px;height:10px;border:2px solid #000;border-radius:50%;background:#a0a0ff;"></div><div style="position:absolute;left:152px;top:166px;width:10px;height:10px;border:2px solid #000;border-radius:50%;background:#a0a0ff;"></div><div style="position:absolute;left:16px;top:196.69px;font:italic normal 11px 'Liberation Sans', sans-serif;line-height:20px;height:20px;color:#2a2a2a;white-space:nowrap;">Output Color</div><div style="position:absolute;left:10px;top:213px;width:140px;height:37px;border-radius:9px;overflow:hidden;background:#000;"><div style="position:absolute;left:0;top:0;width:140px;height:17px;background:#4a4a4a"></div><div style="position:absolute;left:0;top:0;width:47px;height:17px;background:#979797"></div><div style="position:absolute;left:49px;top:0;width:44px;height:17px;background:#979797"></div><div style="position:absolute;left:95px;top:0;width:45px;height:17px;background:#979797"></div><div style="position:absolute;left:0;top:19px;width:70px;height:18px;background:#979797"></div><div style="position:absolute;left:0.0px;width:47px;text-align:center;top:-1.16px;font:italic normal 12px 'Liberation Sans', sans-serif;line-height:20px;height:20px;color:#d6d6d6;white-space:nowrap;">r:0</div><div style="position:absolute;left:49.0px;width:44px;text-align:center;top:-1.16px;font:italic normal 12px 'Liberation Sans', sans-serif;line-height:20px;height:20px;color:#d6d6d6;white-space:nowrap;">g:0</div><div style="position:absolute;left:95.0px;width:45px;text-align:center;top:-1.16px;font:italic normal 12px 'Liberation Sans', sans-serif;line-height:20px;height:20px;color:#d6d6d6;white-space:nowrap;">b:0</div><div style="position:absolute;left:0.0px;width:70px;text-align:center;top:17.84px;font:italic normal 12px 'Liberation Sans', sans-serif;line-height:20px;height:20px;color:#d6d6d6;white-space:nowrap;">#000000</div></div><div style="position:absolute;left:152px;top:215px;width:10px;height:10px;border:2px solid #000;border-radius:50%;background:conic-gradient(from 0deg, #ff0000, #ff9900, #ffff00, #00cc00, #008844, #00ffff, #ee88ee, #ff0000);"></div></div></div>
<div class="node" style="left:1388px;top:523px;width:156px;height:177px;border-color:#000;"><div style="position:absolute;left:-2px;top:-2px;width:160px;height:181px;"><svg width="16" height="16" style="position:absolute;left:6px;top:5px" viewBox="0 0 16 16"><circle cx="8" cy="8" r="8" fill="#000"/><path d="M2.6 6.3 L7.9 11.4 L13.2 6.3" stroke="#fff" stroke-width="2" fill="none"/></svg><svg width="16" height="16" style="position:absolute;left:138px;top:5px" viewBox="0 0 16 16"><circle cx="8" cy="8" r="8" fill="#000"/><path d="M3.5 3.7 L12.5 12.3 M12.5 3.7 L3.5 12.3" stroke="#fff" stroke-width="2.3" fill="none"/></svg><div style="position:absolute;left:29px;top:1.84px;font:normal bold 12px 'Liberation Sans', sans-serif;line-height:20px;height:20px;color:#fff;white-space:nowrap;">Polar Coords</div><div style="position:absolute;left:16px;top:32.19px;font:italic normal 11px 'Liberation Sans', sans-serif;line-height:20px;height:20px;color:#2a2a2a;white-space:nowrap;">Angle Format</div><div style="position:absolute;left:24.5px;top:48.34px;font:normal normal 12px 'Liberation Sans', sans-serif;line-height:20px;height:20px;color:#111;white-space:nowrap;">Rad</div><div style="position:absolute;left:52px;top:48px;width:56px;height:17px;border-radius:8.5px;background:#858585"><div style="position:absolute;left:27px;top:1.5px;width:27px;height:14px;border-radius:7px;background:#c4c4c4"></div></div><div style="position:absolute;left:114px;top:48.34px;font:normal normal 12px 'Liberation Sans', sans-serif;line-height:20px;height:20px;color:#111;white-space:nowrap;">Deg</div><div style="position:absolute;left:16px;top:80.69px;font:italic normal 11px 'Liberation Sans', sans-serif;line-height:20px;height:20px;color:#2a2a2a;white-space:nowrap;">Centered on Mouse</div><div style="position:absolute;left:17px;top:96.84px;font:normal normal 12px 'Liberation Sans', sans-serif;line-height:20px;height:20px;color:#111;white-space:nowrap;">False</div><div style="position:absolute;left:52px;top:96.5px;width:56px;height:17px;border-radius:8.5px;background:#858585"><div style="position:absolute;left:1.5px;top:1.5px;width:27px;height:14px;border-radius:7px;background:#5f5f5f"></div></div><div style="position:absolute;left:114px;top:96.84px;font:normal normal 12px 'Liberation Sans', sans-serif;line-height:20px;height:20px;color:#111;white-space:nowrap;">True</div><div style="position:absolute;right:16px;top:128.34px;font:normal normal 12px 'Liberation Sans', sans-serif;line-height:20px;height:20px;color:#000;white-space:nowrap;">Theta</div><div style="position:absolute;left:152px;top:130px;width:10px;height:10px;border:2px solid #000;border-radius:50%;background:#14e464;"></div><div style="position:absolute;right:16px;top:154.34px;font:normal normal 12px 'Liberation Sans', sans-serif;line-height:20px;height:20px;color:#000;white-space:nowrap;">Radius</div><div style="position:absolute;left:152px;top:156px;width:10px;height:10px;border:2px solid #000;border-radius:50%;background:#14e464;"></div></div></div>
<div class="node" style="left:1388px;top:723px;width:166px;height:106px;border-color:#000;"><div style="position:absolute;left:-2px;top:-2px;width:170px;height:110px;"><svg width="16" height="16" style="position:absolute;left:6px;top:5px" viewBox="0 0 16 16"><circle cx="8" cy="8" r="8" fill="#000"/><path d="M2.6 6.3 L7.9 11.4 L13.2 6.3" stroke="#fff" stroke-width="2" fill="none"/></svg><svg width="16" height="16" style="position:absolute;left:148px;top:5px" viewBox="0 0 16 16"><circle cx="8" cy="8" r="8" fill="#000"/><path d="M3.5 3.7 L12.5 12.3 M12.5 3.7 L3.5 12.3" stroke="#fff" stroke-width="2.3" fill="none"/></svg><div style="position:absolute;left:29px;top:1.84px;font:normal bold 12px 'Liberation Sans', sans-serif;line-height:20px;height:20px;color:#fff;white-space:nowrap;">Canvas Info</div><div style="position:absolute;right:16px;top:30.34px;font:normal normal 12px 'Liberation Sans', sans-serif;line-height:20px;height:20px;color:#000;white-space:nowrap;">Width x Height as Vector2</div><div style="position:absolute;left:162px;top:32px;width:10px;height:10px;border:2px solid #000;border-radius:50%;background:#a0a0ff;"></div><div style="position:absolute;right:16px;top:56.34px;font:normal normal 12px 'Liberation Sans', sans-serif;line-height:20px;height:20px;color:#000;white-space:nowrap;">Width</div><div style="position:absolute;left:162px;top:58px;width:10px;height:10px;border:2px solid #000;border-radius:50%;background:#18b84a;"></div><div style="position:absolute;right:16px;top:82.34px;font:normal normal 12px 'Liberation Sans', sans-serif;line-height:20px;height:20px;color:#000;white-space:nowrap;">Height</div><div style="position:absolute;left:162px;top:84px;width:10px;height:10px;border:2px solid #000;border-radius:50%;background:#18b84a;"></div></div></div>
<div class="node" style="left:1958px;top:603px;width:200px;height:170px;border-color:#000;"><div style="position:absolute;left:-2px;top:-2px;width:204px;height:174px;"><svg width="16" height="16" style="position:absolute;left:6px;top:5px" viewBox="0 0 16 16"><circle cx="8" cy="8" r="8" fill="#000"/><path d="M2.6 6.3 L7.9 11.4 L13.2 6.3" stroke="#fff" stroke-width="2" fill="none"/></svg><svg width="16" height="16" style="position:absolute;left:182px;top:5px" viewBox="0 0 16 16"><circle cx="8" cy="8" r="8" fill="#000"/><path d="M3.5 3.7 L12.5 12.3 M12.5 3.7 L3.5 12.3" stroke="#fff" stroke-width="2.3" fill="none"/></svg><div style="position:absolute;left:29px;top:1.84px;font:normal bold 12px 'Liberation Sans', sans-serif;line-height:20px;height:20px;color:#fff;white-space:nowrap;">Group Node</div><div style="position:absolute;left:16px;top:32.19px;font:italic normal 11px 'Liberation Sans', sans-serif;line-height:20px;height:20px;color:#2a2a2a;white-space:nowrap;">Group Name</div><div style="position:absolute;left:12px;top:51px;width:19px;height:11px;border-radius:3px;background:#111;"><div style="position:absolute;left:0.0px;width:19px;text-align:center;top:-3.96px;font:normal normal 10px 'Liberation Sans', sans-serif;line-height:20px;height:20px;color:#bbb;white-space:nowrap;">abc</div></div><div style="position:absolute;left:34.5px;top:48px;width:159px;height:18px;border-radius:9.0px;background:#808080;"><div style="position:absolute;left:29.5px;width:100px;text-align:center;top:-1.16px;font:normal normal 12px 'Liberation Sans', sans-serif;line-height:20px;height:20px;color:#fff;white-space:nowrap;">Group</div></div><div style="position:absolute;left:10px;top:75px;width:183px;height:28px;border-radius:6px;background:#5a5a5a;box-shadow:1px 2px 0 #000"></div><div style="position:absolute;left:41.5px;width:120px;text-align:center;top:80.34px;font:normal normal 12px 'Liberation Sans', sans-serif;line-height:20px;height:20px;color:#fff;white-space:nowrap;">Edit Graph</div><div style="position:absolute;left:16px;top:120.34px;font:normal normal 12px 'Liberation Sans', sans-serif;line-height:20px;height:20px;color:#000;white-space:nowrap;">A Value</div><div style="position:absolute;left:-6px;top:122px;width:10px;height:10px;border:2px solid #000;border-radius:50%;background:#14e464;"></div><div style="position:absolute;left:16px;top:146.34px;font:normal normal 12px 'Liberation Sans', sans-serif;line-height:20px;height:20px;color:#000;white-space:nowrap;">A Color</div><div style="position:absolute;left:-6px;top:148px;width:10px;height:10px;border:2px solid #000;border-radius:50%;background:conic-gradient(from 0deg, #ff0000, #ff9900, #ffff00, #00cc00, #008844, #00ffff, #ee88ee, #ff0000);"></div><div style="position:absolute;right:16px;top:146.34px;font:normal normal 12px 'Liberation Sans', sans-serif;line-height:20px;height:20px;color:#000;white-space:nowrap;">Result</div><div style="position:absolute;left:196px;top:148px;width:10px;height:10px;border:2px solid #000;border-radius:50%;background:conic-gradient(from 0deg, #ff0000, #ff9900, #ffff00, #00cc00, #008844, #00ffff, #ee88ee, #ff0000);"></div></div></div>
<div class="node" style="left:2258px;top:423px;width:156px;height:54px;border-color:#000;"><div style="position:absolute;left:-2px;top:-2px;width:160px;height:58px;"><svg width="16" height="16" style="position:absolute;left:6px;top:5px" viewBox="0 0 16 16"><circle cx="8" cy="8" r="8" fill="#000"/><path d="M2.6 6.3 L7.9 11.4 L13.2 6.3" stroke="#fff" stroke-width="2" fill="none"/></svg><svg width="16" height="16" style="position:absolute;left:138px;top:5px" viewBox="0 0 16 16"><circle cx="8" cy="8" r="8" fill="#000"/><path d="M3.5 3.7 L12.5 12.3 M12.5 3.7 L3.5 12.3" stroke="#fff" stroke-width="2.3" fill="none"/></svg><div style="position:absolute;left:29px;top:1.84px;font:normal bold 12px 'Liberation Sans', sans-serif;line-height:20px;height:20px;color:#fff;white-space:nowrap;">Output Color</div><div style="position:absolute;left:16px;top:30.34px;font:normal normal 12px 'Liberation Sans', sans-serif;line-height:20px;height:20px;color:#000;white-space:nowrap;">Output Color</div><div style="position:absolute;left:-6px;top:32px;width:10px;height:10px;border:2px solid #000;border-radius:50%;background:conic-gradient(from 0deg, #ff0000, #ff9900, #ffff00, #00cc00, #008844, #00ffff, #ee88ee, #ff0000);"></div></div></div>
    </div>
    <div class="fab" style="left:20px;bottom:18px;"></div>
  </div>
  <svg width="13" height="13" style="position:absolute;left:0;top:0" viewBox="0 0 13 13"><path d="M0 0 H3.6 L0 3.6 Z" fill="#000"/><path d="M0 3.6 L3.6 0 M0 7.6 L7.6 0 M0 11.6 L11.6 0" stroke="#4c4c4c" stroke-width="1"/></svg><svg width="13" height="13" style="position:absolute;left:1279px;top:0;transform:scaleX(-1)" viewBox="0 0 13 13"><path d="M0 0 H3.6 L0 3.6 Z" fill="#000"/><path d="M0 3.6 L3.6 0 M0 7.6 L7.6 0 M0 11.6 L11.6 0" stroke="#4c4c4c" stroke-width="1"/></svg><svg width="13" height="13" style="position:absolute;left:0;bottom:0;transform:scaleY(-1)" viewBox="0 0 13 13"><path d="M0 0 H3.6 L0 3.6 Z" fill="#000"/><path d="M0 3.6 L3.6 0 M0 7.6 L7.6 0 M0 11.6 L11.6 0" stroke="#5a5a5a" stroke-width="1"/></svg><svg width="13" height="13" style="position:absolute;left:1279px;bottom:0;transform:scale(-1,-1)" viewBox="0 0 13 13"><path d="M0 0 H3.6 L0 3.6 Z" fill="#000"/><path d="M0 3.6 L3.6 0 M0 7.6 L7.6 0 M0 11.6 L11.6 0" stroke="#5a5a5a" stroke-width="1"/></svg>
</div>
<div style="position:absolute;left:1264px;top:1283px;width:32px;height:32px;border-radius:50%;background:#fff;"></div>
<svg width="12" height="8" style="position:absolute;left:1274px;top:1291px" viewBox="0 0 12 8"><path d="M1 1 L6 7 L11 1" stroke="#8a8a8a" stroke-width="2.5" fill="none"/></svg>
</body></html>
